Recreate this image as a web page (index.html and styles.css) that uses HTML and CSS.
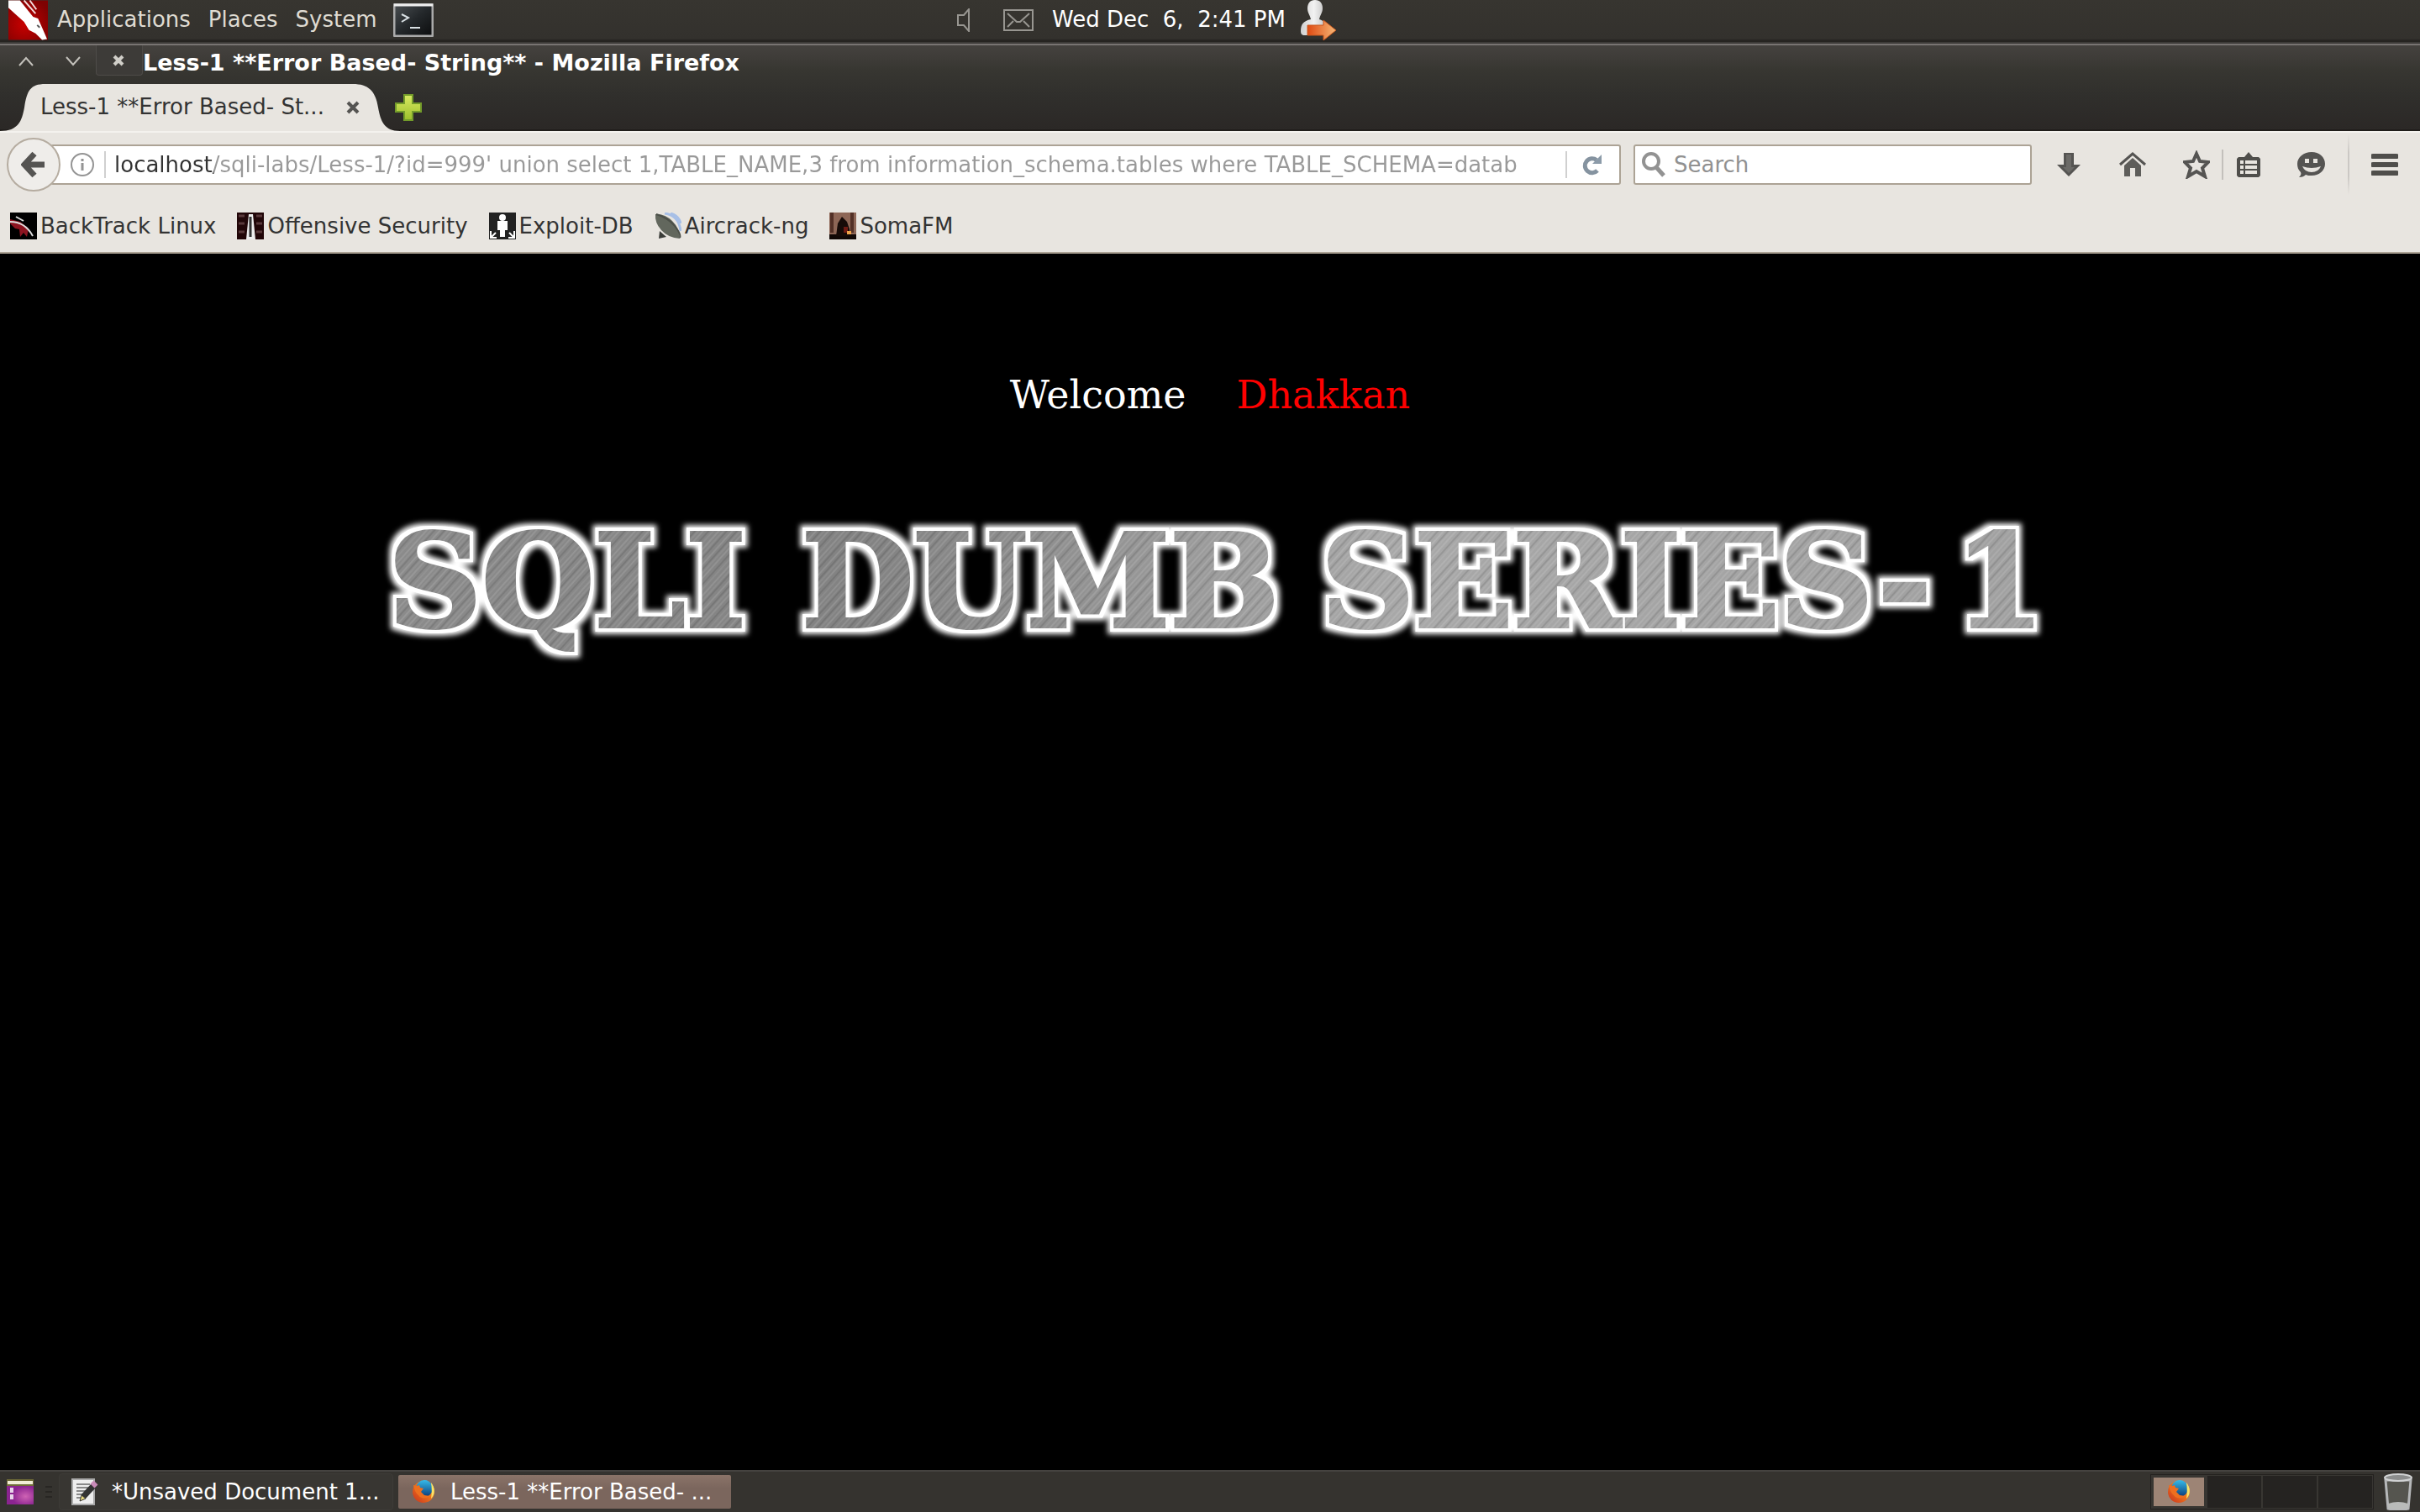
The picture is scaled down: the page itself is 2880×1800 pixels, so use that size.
FILE: index.html
```html
<!DOCTYPE html>
<html lang="en">
<head>
<meta charset="utf-8">
<title>Less-1 **Error Based- String**</title>
<link rel="stylesheet" href="styles.css">
</head>
<body>
<header class="panel">
  <nav class="panel-menu">
    <svg class="distro" viewBox="0 0 48 48" aria-hidden="true">
      <defs><radialGradient id="red" cx=".4" cy=".6" r=".7"><stop offset="0" stop-color="#c80000"/><stop offset="1" stop-color="#7e0202"/></radialGradient></defs>
      <rect width="48" height="48" fill="url(#red)"/>
      <path d="M0 0h14l8 10 8 10 6 2 4 9 7 16-6 1-8-8-8-4-6-10-10-9L0 9z" fill="#fff"/>
      <path d="M19 0l14 16M26 0l8 11" stroke="#f3dcdc" stroke-width="2" fill="none"/>
      <path d="M35 30l3 3" stroke="#555" stroke-width="2"/>
    </svg>
    <button class="menu-item">Applications</button>
    <button class="menu-item">Places</button>
    <button class="menu-item">System</button>
    <button class="launcher" aria-label="Terminal">
      <svg width="48" height="40" viewBox="0 0 48 40">
        <defs><linearGradient id="term" x1="0" y1="0" x2="1" y2="1"><stop offset="0" stop-color="#4b5053"/><stop offset=".5" stop-color="#24282b"/><stop offset="1" stop-color="#0b0c0d"/></linearGradient></defs>
        <rect x="1" y="1" width="46" height="38" rx="2" fill="url(#term)" stroke="#aaa" stroke-width="3"/>
        <path d="M1 2h46" stroke="#eee" stroke-width="3"/>
        <path d="M10 13l8 4-8 5M20 29h12" stroke="#d9e0e4" stroke-width="2" fill="none"/>
      </svg>
    </button>
  </nav>
  <div class="panel-status">
    <svg class="speaker" width="16" height="28" viewBox="0 0 16 28"><path d="M1 8h7l6-7v26l-6-7H1z" fill="none" stroke="#989691" stroke-width="2"/></svg>
    <svg class="mail" width="36" height="26" viewBox="0 0 36 26"><path d="M1 1h34v24H1zM5 5l11 10h4L31 5M5 21l7-7M31 21l-7-7" fill="none" stroke="#989691" stroke-width="2"/></svg>
    <time class="clock">Wed Dec&nbsp; 6,&nbsp; 2:41 PM</time>
    <svg width="44" height="48" viewBox="0 0 44 48">
      <defs><linearGradient id="arrow"><stop offset="0" stop-color="#df4a12"/><stop offset="1" stop-color="#f6b877"/></linearGradient><linearGradient id="body"><stop offset="0" stop-color="#cfcfcf"/><stop offset=".5" stop-color="#f2f2f2"/><stop offset="1" stop-color="#bdbdbd"/></linearGradient></defs>
      <path d="M17 0c6 0 9 4 9 10 0 5-3 8-4 13 6 2 9 5 9 12v7H5c-4 0-5-2-5-5 0-8 3-12 12-14-1-5-4-8-4-13 0-6 3-10 9-10z" fill="url(#body)"/>
      <path d="M8 30h19v-6l15 12-15 12v-6H8z" fill="url(#arrow)" stroke="#c8571d"/>
    </svg>
  </div>
</header>

<div class="window-head">
  <div class="titlebar">
    <button class="win-btn" aria-label="Minimize"><svg width="18" height="12" viewBox="0 0 18 12"><path d="M1 11l8-9 8 9" class="win-stroke"/></svg></button>
    <button class="win-btn" aria-label="Maximize"><svg width="18" height="12" viewBox="0 0 18 12"><path d="M1 1l8 9 8-9" class="win-stroke"/></svg></button>
    <button class="win-btn win-close" aria-label="Close window"><svg width="16" height="16" viewBox="0 0 16 16"><path d="M3 3l10 10M13 3L3 13" stroke="#d0cec8" stroke-width="4"/></svg></button>
    <h2 class="win-title">Less-1 **Error Based- String** - Mozilla Firefox</h2>
  </div>
  <div class="tabs">
    <div class="tab">
      <svg class="tab-shape" viewBox="0 0 476 56" preserveAspectRatio="none" aria-hidden="true"><path d="M0 56C22 56 26 44 29 28C32 8 36 0 54 0H420C438 0 447 8 450 28C453 44 457 56 476 56Z" fill="#e8e5e0"/></svg>
      <span class="tab-label">Less-1 **Error Based- St...</span>
      <button class="tab-close" aria-label="Close tab"><svg width="16" height="16" viewBox="0 0 16 16"><path d="M2 2l12 12M14 2L2 14" stroke="#555452" stroke-width="4"/></svg></button>
    </div>
    <button class="new-tab" aria-label="New tab"><svg width="32" height="32" viewBox="0 0 32 32">
      <defs><linearGradient id="plus" x2="0" y2="1"><stop offset="0" stop-color="#d9ea62"/><stop offset="1" stop-color="#9cbf2c"/></linearGradient></defs>
      <path d="M11 1h10v10h10v10H21v10H11V21H1V11h10z" fill="url(#plus)" stroke="#739b2a" stroke-width="2"/></svg></button>
  </div>
</div>

<div class="toolbar">
  <div class="nav-row">
    <button class="back" aria-label="Back"><svg width="30" height="32" viewBox="0 0 30 32"><path d="M16 3L4 16l12 13M5 16h23" fill="none" stroke="#555452" stroke-width="7"/></svg></button>
    <div class="urlbar">
      <svg width="28" height="28" viewBox="0 0 28 28" aria-hidden="true"><circle cx="14" cy="14" r="13" fill="none" stroke="#949494" stroke-width="2"/><path d="M14 7v3M14 12v9" stroke="#949494" stroke-width="3"/></svg>
      <span class="sep"></span>
      <input class="url-input" type="text" aria-label="Address" value="localhost/sqli-labs/Less-1/?id=999' union select 1,TABLE_NAME,3 from information_schema.tables where TABLE_SCHEMA=datab">
      <span class="sep"></span>
      <button class="reload" aria-label="Reload"><svg width="24" height="26" viewBox="0 0 24 26"><path d="M17 7.500A8.500 8.500 0 1 0 18 20" fill="none" stroke="#8593a0" stroke-width="5"/><path d="M12 12h11V1z" fill="#8c9ba9"/></svg></button>
    </div>
    <div class="searchbar">
      <svg width="28" height="30" viewBox="0 0 28 30" aria-hidden="true"><circle cx="11" cy="11" r="9" fill="none" stroke="#929292" stroke-width="4"/><path d="M17 18l9 10" stroke="#929292" stroke-width="5"/></svg>
      <input class="search-input" type="text" aria-label="Search" placeholder="Search">
    </div>
    <div class="tools">
      <button class="tool" aria-label="Downloads"><svg width="32" height="32" viewBox="0 0 32 32"><path d="M10 2h12v14h8L16 30 2 16h8z" fill="#555452"/><path d="M13 4h6v15h4l-7 7-7-7h4z" fill="#6b6a67"/></svg></button>
      <button class="tool" aria-label="Home"><svg width="32" height="32" viewBox="0 0 32 32"><path d="M1 16L16 3l15 13" fill="none" stroke="#555452" stroke-width="3"/><path d="M6 17L16 8l10 9v13h-7V20h-6v10H6z" fill="#5e5d5a"/></svg></button>
      <span class="pair">
        <button class="tool" aria-label="Bookmark this page"><svg width="32" height="34" viewBox="0 0 32 34"><path d="M16 4l4 9 10 1-7 7 3 10-10-6-10 6 3-10-7-7 10-1z" fill="none" stroke="#555452" stroke-width="4"/></svg></button>
        <span class="sep tall"></span>
        <button class="tool" aria-label="Show bookmarks"><svg width="28" height="32" viewBox="0 0 28 32"><path d="M2 7h7l5-6 5 6h7l2 2v20l-2 2H2l-2-2V9z" fill="#4f4e4b"/><path d="M4 11h4v4H4zM10 11h14v4H10zM4 17h4v4H4zM10 17h14v4H10zM4 23h4v4H4zM10 23h14v4H10z" fill="#e8e5e0"/></svg></button>
      </span>
      <button class="tool" aria-label="Hello"><svg width="34" height="32" viewBox="0 0 34 32"><path d="M17 1c9 0 16 6 16 14s-7 14-16 14c-3 0-5 0-7-1-2 2-4 3-8 3 2-2 3-4 2-6-3-3-4-6-4-10C0 7 8 1 17 1z" fill="#555452"/><path d="M9 9h5v5H9zM19 9h5v5h-5zM6 18q11 4 22 0-3 7-11 7T6 18z" fill="#e8e5e0"/></svg></button>
      <span class="divider"></span>
      <button class="tool" aria-label="Open menu"><svg width="32" height="28" viewBox="0 0 32 28"><path d="M2 4h28M2 14h28M2 24h28" stroke="#4f4e4b" stroke-width="6" stroke-linecap="round"/></svg></button>
    </div>
  </div>
  <nav class="bookmarks">
    <a class="bookmark" href="#"><svg width="32" height="32" viewBox="0 0 32 32"><path d="M0 0h32v32H0z"/><path d="M0 8l12 3 10 8-2 10-4-5-4 5-1-9-5-1-6-6z" fill="#8d1420"/><path d="M0 11q18 0 27 17M7 5l9 5" fill="none" stroke="#ddd" stroke-width="2"/></svg>BackTrack Linux</a>
    <a class="bookmark" href="#"><svg width="32" height="32" viewBox="0 0 32 32"><path d="M0 0h32v32H0z" fill="#210608"/><path d="M2 4h7M2 13h7M2 23h7M23 4h7M23 13h7M23 23h7" stroke="#59393b" stroke-width="3"/><path d="M14 2h5l3 30H11z" fill="#eee"/><path d="M16 5v24" stroke="#333" stroke-width="3"/></svg>Offensive Security</a>
    <a class="bookmark" href="#"><svg width="32" height="32" viewBox="0 0 32 32"><path d="M0 0h32v32H0z" fill="#222"/><circle cx="16" cy="6" r="4" fill="#fff"/><path d="M10 10h12v11h-3v8h-6v-8h-3z" fill="#fff"/><path d="M2 22v8h7M30 22v8h-7M3 29l5-5M29 29l-5-5" fill="none" stroke="#fff" stroke-width="2"/></svg>Exploit-DB</a>
    <a class="bookmark" href="#"><svg width="32" height="32" viewBox="0 0 32 32"><path d="M12 1q17 2 19 21M19 1q10 3 12 12" fill="none" stroke="#a7bfe6" stroke-width="3"/><path d="M1 2Q12 1 21 10T30 31Q16 30 8 21T1 2z" fill="#62675d"/><path d="M2 2q14 4 22 14t6 14" stroke="#4b4f48" fill="none" stroke-width="2"/><path d="M6 22l-1 9 9-2z" fill="#3b3d39"/></svg>Aircrack-ng</a>
    <a class="bookmark" href="#"><svg width="32" height="32" viewBox="0 0 32 32"><path d="M0 0h32v32H0z" fill="#8d6656"/><path d="M3 0v24M27 0v24" stroke="#523026" stroke-width="4"/><path d="M0 26h32v6H0z" fill="#110806"/><path d="M8 28l2-15 5-8 6 6 3 9v8z" fill="#170b08"/><path d="M17 17h5v7h-5z" fill="#701b13"/><path d="M21 22h5v4h-5z" fill="#f0a44a"/></svg>SomaFM</a>
  </nav>
</div>

<main class="page">
  <p class="welcome"><span>Welcome</span><span class="name">Dhakkan</span></p>
  <h1 class="banner">
    <svg class="banner-art" viewBox="0 0 2080 200" role="img" aria-label="SQLI DUMB SERIES-1">
      <defs>
        <linearGradient id="steel"><stop offset="0" stop-color="#8c8c8c"/><stop offset=".3" stop-color="#828282"/><stop offset=".6" stop-color="#a8a8a8"/><stop offset="1" stop-color="#a0a0a0"/></linearGradient>
        <pattern id="grain" width="37" height="400" patternUnits="userSpaceOnUse" patternTransform="rotate(42)">
          <path d="M2 0v400M13 0v400M27 0v400" stroke="#fff" stroke-opacity=".11" stroke-width="2"/>
          <path d="M6 0v400M18 0v400M34 0v400" stroke="#000" stroke-opacity=".1" stroke-width="2"/>
          <path d="M9 0v400M22 0v400M31 0v400" stroke="#fff" stroke-opacity=".12"/>
        </pattern>
        <pattern id="brushed" width="2080" height="200" patternUnits="userSpaceOnUse">
          <path d="M0 0h2080v200H0z" fill="url(#steel)"/>
          <path d="M0 0h2080v200H0z" fill="url(#grain)"/>
        </pattern>
        <filter id="halo" x="0" y="0" width="2080" height="200" filterUnits="userSpaceOnUse">
          <feMorphology in="SourceAlpha" operator="dilate" radius="7" result="fat"/>
          <feGaussianBlur in="fat" stdDeviation="3" result="soft"/>
          <feFlood flood-color="#fff"/>
          <feComposite in2="soft" operator="in" result="glow"/>
          <feMorphology in="SourceAlpha" operator="dilate" radius="4" result="edge"/>
          <feFlood flood-color="#fff"/>
          <feComposite in2="edge" operator="in" result="rim"/>
          <feMerge><feMergeNode in="glow"/><feMergeNode in="rim"/><feMergeNode in="SourceGraphic"/></feMerge>
        </filter>
      </defs>
      <g class="banner-text" filter="url(#halo)" fill="url(#brushed)" stroke="url(#brushed)">
        <text x="62" y="146">SQLI</text>
        <text x="554" y="146">DUMB</text>
        <text x="1172" y="146">SERIES-</text>
        <text x="1926" y="146">1</text>
      </g>
    </svg>
  </h1>
</main>

<footer class="taskbar">
  <button class="show-desktop" aria-label="Show desktop"><svg width="32" height="30" viewBox="0 0 32 30"><defs><radialGradient id="purple" cx=".7" cy=".6"><stop offset="0" stop-color="#cf63b4"/><stop offset="1" stop-color="#8b2490"/></radialGradient></defs><path d="M0 6h32v24H0z" fill="url(#purple)"/><path d="M0 0h32v8H0z" fill="#6f6c38"/><path d="M1 2h30v4H1z" fill="#f1eed6"/><path d="M4 10h4v6H4zM4 18h4v6H4z" fill="#e8d4ea"/></svg></button>
  <span class="grip"></span>
  <button class="task"><svg width="32" height="32" viewBox="0 0 32 32"><path d="M1 1h26v30H1z" fill="#eee" stroke="#aaa" stroke-width="2"/><path d="M6 7h16M6 11h18M6 15h12M6 19h9M6 23h6" stroke="#888" stroke-width="2"/><path d="M14 22L27 8" stroke="#333" stroke-width="7"/><path d="M25 9l4-4" stroke="#c98bb8" stroke-width="7"/><path d="M10 27l2-7 5 4z" fill="#e8d97c" stroke="#333"/></svg><span>*Unsaved Document 1...</span></button>
  <button class="task active"><svg class="fox" width="28" height="30" viewBox="0 0 28 30"><use href="#fox"/></svg><span>Less-1 **Error Based- ...</span></button>
  <div class="tray">
    <div class="pager">
      <button class="desk current" aria-label="Workspace 1"><span class="desk-win"><svg width="28" height="30" viewBox="0 0 28 30">
        <defs><linearGradient id="fire" x1="1" y1="0" x2="0" y2="1"><stop offset="0" stop-color="#fbe24a"/><stop offset=".4" stop-color="#ee7b1f"/><stop offset="1" stop-color="#c9301c"/></linearGradient><linearGradient id="globe" x2="0" y2="1"><stop offset="0" stop-color="#35bbea"/><stop offset="1" stop-color="#0b3a78"/></linearGradient></defs>
        <g id="fox"><circle cx="14" cy="15" r="13" fill="url(#fire)"/><circle cx="15" cy="11" r="10" fill="url(#globe)"/><path d="M2 7l4 1 3-1 1 3 4 1-3 4 4 4 7 1c-5 4-12 3-14-1C5 17 3 12 2 7z" fill="#ee6f1f"/><path d="M23 4c5 6 5 14 0 19 1-6 1-13 0-19z" fill="#fbe468"/></g></svg></span></button>
      <button class="desk" aria-label="Workspace 2"></button>
      <button class="desk" aria-label="Workspace 3"></button>
      <button class="desk" aria-label="Workspace 4"></button>
    </div>
    <button class="trash" aria-label="Trash"><svg width="36" height="44" viewBox="0 0 36 44"><path d="M3 8h30l-3 34q-12 3-24 0z" fill="#55554f" stroke="#b5b7b9" stroke-width="3"/><path d="M6 36q12-4 24 0v6q-12 2-24 0z" fill="#b9bbb9"/><ellipse cx="18" cy="5" rx="16" ry="4" fill="#8b8d8d" stroke="#d0d2d3" stroke-width="2"/></svg></button>
  </div>
</footer>
</body>
</html>
```
FILE: styles.css
```css
* { box-sizing: border-box; }
body {
  margin: 0;
  min-height: 100vh;
  display: flex;
  flex-direction: column;
  background: #000;
  font-family: "DejaVu Sans", sans-serif;
  font-size: 26px;
  line-height: 32px;
  color: #333;
}
button { border: 0; padding: 0; margin: 0; background: none; font: inherit; color: inherit; display: flex; align-items: center; }
input { border: 0; padding: 0; font: inherit; outline: 0; background: none; min-width: 0; }
svg { display: block; flex: none; }
a { color: inherit; text-decoration: none; }

/* top desktop panel */
.panel {
  display: grid;
  grid-template-columns: 1139px 1fr;
  height: 52px;
  padding-bottom: 4px;
  background: linear-gradient(#373530, #33312d 46px, #262421 48px, #262421 50px, #3d3b38 50px);
  color: #dfdbd2;
}
.panel-menu { display: flex; align-items: center; padding-left: 10px; }
.distro { width: 47px; height: 48px; margin-right: 11px; }
.menu-item { margin-right: 21px; padding-bottom: 2px; }
.launcher { margin-left: -1px; }
.panel-status { display: flex; align-items: center; }
.mail { margin: 0 22px 0 39px; }
.clock { color: #fff; padding-bottom: 2px; margin-right: 18px; white-space: nowrap; }

/* window title and tabs */
.window-head {
  height: 104px;
  border-top: 2px solid #787472;
  border-bottom: 2px solid #211e1b;
  background: linear-gradient(#45423f, #373631 30px, #302f2c 60px, #2b2826);
}
.titlebar { display: flex; height: 46px; }
.win-btn { width: 56px; height: 38px; justify-content: center; padding-left: 6px; }
.win-stroke { fill: none; stroke: #c4c2bc; stroke-width: 2; }
.win-close { width: 56px; height: 36px; margin-left: 2px; padding: 0 2px 0 0; background: #3d3b38; border: 1px solid #4e4b48; border-top: 0; border-radius: 0 0 4px 4px; }
.win-title { margin: 2px 0 0; font-size: 27px; line-height: 38px; color: #fff; }
.tabs { display: flex; height: 56px; }
.tab { position: relative; display: flex; align-items: center; width: 476px; height: 56px; padding-left: 48px; }
.tab-shape { position: absolute; inset: 0; width: 100%; height: 100%; }
.tab-label { position: relative; flex: none; width: 364px; padding-bottom: 2px; white-space: nowrap; }
.tab-close { position: relative; }
.new-tab { margin-left: -6px; }

/* navigation */
.toolbar { height: 146px; background: #e8e5e0; border-top: 2px solid #f4f2ee; border-bottom: 2px solid #aca395; }
.nav-row { display: flex; align-items: center; height: 76px; padding: 0 26px 0 8px; }
.back { position: relative; z-index: 1; width: 64px; height: 64px; justify-content: center; background: #efedea; border: 2px solid #b5aca0; border-radius: 50%; }
.urlbar, .searchbar { display: flex; align-items: center; height: 48px; background: #fff; border: 2px solid #aca395; border-radius: 3px; }
.urlbar { flex: 1; margin-left: -12px; padding: 0 20px 0 22px; }
.sep { flex: none; width: 2px; height: 32px; background: #d0d0d0; margin: 0 10px 0 12px; }
.tall { height: 36px; background: #c3c0bc; margin: 0 16px 0 14px; }
.url-input {
  flex: 1;
  height: 36px;
  color: #999;
  background: linear-gradient(90deg, #333 118px, #999 118px);
  -webkit-background-clip: text;
  background-clip: text;
  -webkit-text-fill-color: transparent;
}
.reload { margin-left: 8px; }
.searchbar { width: 474px; margin-left: 15px; padding-left: 8px; gap: 10px; }
.search-input { flex: 1; height: 36px; }
.search-input::placeholder { color: #919191; opacity: 1; }
.tools { display: flex; align-items: center; gap: 44px; margin-left: 28px; }
.pair { display: flex; align-items: center; }
.divider { width: 2px; height: 72px; margin: 0 -18px; background: linear-gradient(transparent, #cbc8c4 30%, #cbc8c4 70%, transparent); }
.bookmarks { display: flex; align-items: center; gap: 25px; height: 66px; padding: 4px 12px 0; }
.bookmark { display: flex; align-items: center; gap: 4px; white-space: nowrap; }

/* page content */
.page { flex: 1; padding-top: 140px; }
.welcome { display: flex; justify-content: center; gap: 60px; margin: 0; font: 46px/56px "DejaVu Serif", serif; color: #fff; }
.name { color: #f00; }
.banner { margin: 102px 0 0; }
.banner-art { width: 2080px; max-width: 100%; margin: 0 auto; }
.banner-text { font: bold 154px "DejaVu Serif", serif; stroke-width: 4px; }

/* bottom task bar */
.taskbar { display: flex; align-items: center; height: 50px; padding: 0 8px; background: #35332f; border-top: 2px solid #454340; color: #fff; }
.grip { width: 8px; height: 14px; margin: 0 8px 0 14px; background: repeating-linear-gradient(#282623 0 2px, transparent 2px 6px); }
.task { width: 398px; height: 44px; padding-left: 14px; gap: 16px; border: 1px solid #3d3b37; border-radius: 4px; background: #383632; white-space: nowrap; }
.task.active { width: 396px; height: 40px; margin-left: 6px; padding-left: 16px; gap: 18px; border: 0; border-radius: 2px; background: linear-gradient(#8a7368, #7b665d 40%); }
.tray { display: flex; align-items: center; gap: 11px; margin-left: auto; }
.pager { display: flex; gap: 2px; height: 42px; padding: 1px; background: #383632; border: 1px solid #23211f; }
.desk { width: 64px; background: #252321; }
.desk.current { background: #383632; justify-content: center; }
.desk-win { display: flex; justify-content: center; align-items: center; width: 60px; height: 34px; background: #9d8475; }
```
